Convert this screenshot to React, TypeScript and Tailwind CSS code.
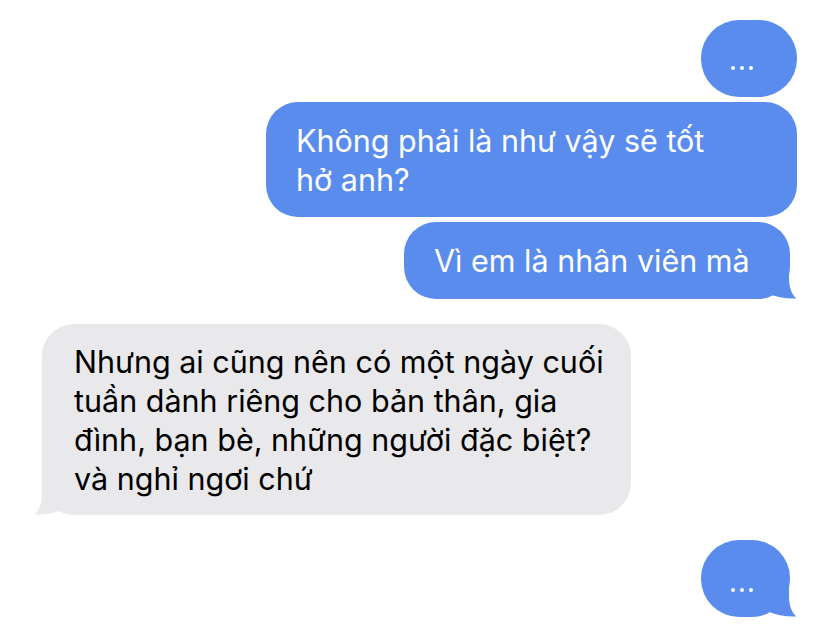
import React from "react";

const BLUE = "bg-[#5a8cee]";

function Tail({ color, side }: { color: string; side: "left" | "right" }) {
  // iMessage style tail hanging off the bottom corner
  return (
    <svg
      width="41"
      height="41"
      viewBox="0 0 41 41"
      className={
        side === "right"
          ? "absolute bottom-0 right-[-7px]"
          : "absolute bottom-0 left-[-8px] -scale-x-100"
      }
    >
      <path
        d="M33 3 L33 20 C33 28 35 36 40.5 40.5 C31 41 20 39 11 35 L3 21 Z"
        fill={color}
      />
    </svg>
  );
}

function Dots() {
  return (
    <div className="flex items-center gap-[5px]">
      <span className="w-[4px] h-[4px] rounded-full bg-white" />
      <span className="w-[4px] h-[4px] rounded-full bg-white" />
      <span className="w-[4px] h-[4px] rounded-full bg-white" />
    </div>
  );
}

export default function App() {
  return (
    <div
      className="w-[828px] h-[642px] bg-white overflow-hidden flex flex-col pt-[20px] pl-[42px] pr-[31px] text-[30.5px] leading-[39px]"
      style={{ fontFamily: "Inter, 'Noto Sans', sans-serif" }}
    >
      {/* typing bubble */}
      <div className={`self-end w-[96px] h-[77px] rounded-[38px] ${BLUE} flex items-start pl-[30px] pt-[46px]`}>
        <Dots />
      </div>

      <div className={`self-end mt-[5px] w-[531px] h-[115px] rounded-[32px] ${BLUE} text-white px-[30px] pt-[19px]`}>
        Không phải là như vậy sẽ tốt
        <br />
        hở anh?
      </div>

      <div className={`relative self-end mt-[5px] mr-[7px] w-[386px] h-[77px] rounded-[32px] ${BLUE} text-white pl-[30px] pt-[19px]`}>
        Vì em là nhân viên mà
        <Tail color="#5a8cee" side="right" />
      </div>

      <div className="relative self-start mt-[25px] w-[589px] h-[191px] rounded-[32px] bg-[#e9e9eb] text-black pl-[32px] pt-[18px]">
        Nhưng ai cũng nên có một ngày cuối
        <br />
        tuần dành riêng cho bản thân, gia
        <br />
        đình, bạn bè, những người đặc biệt?
        <br />
        và nghỉ ngơi chứ
        <Tail color="#e9e9eb" side="left" />
      </div>

      <div className={`relative self-end mt-[25px] mr-[7px] w-[89px] h-[77px] rounded-[38px] ${BLUE} flex items-start pl-[30px] pt-[48px]`}>
        <Dots />
        <Tail color="#5a8cee" side="right" />
      </div>
    </div>
  );
}
